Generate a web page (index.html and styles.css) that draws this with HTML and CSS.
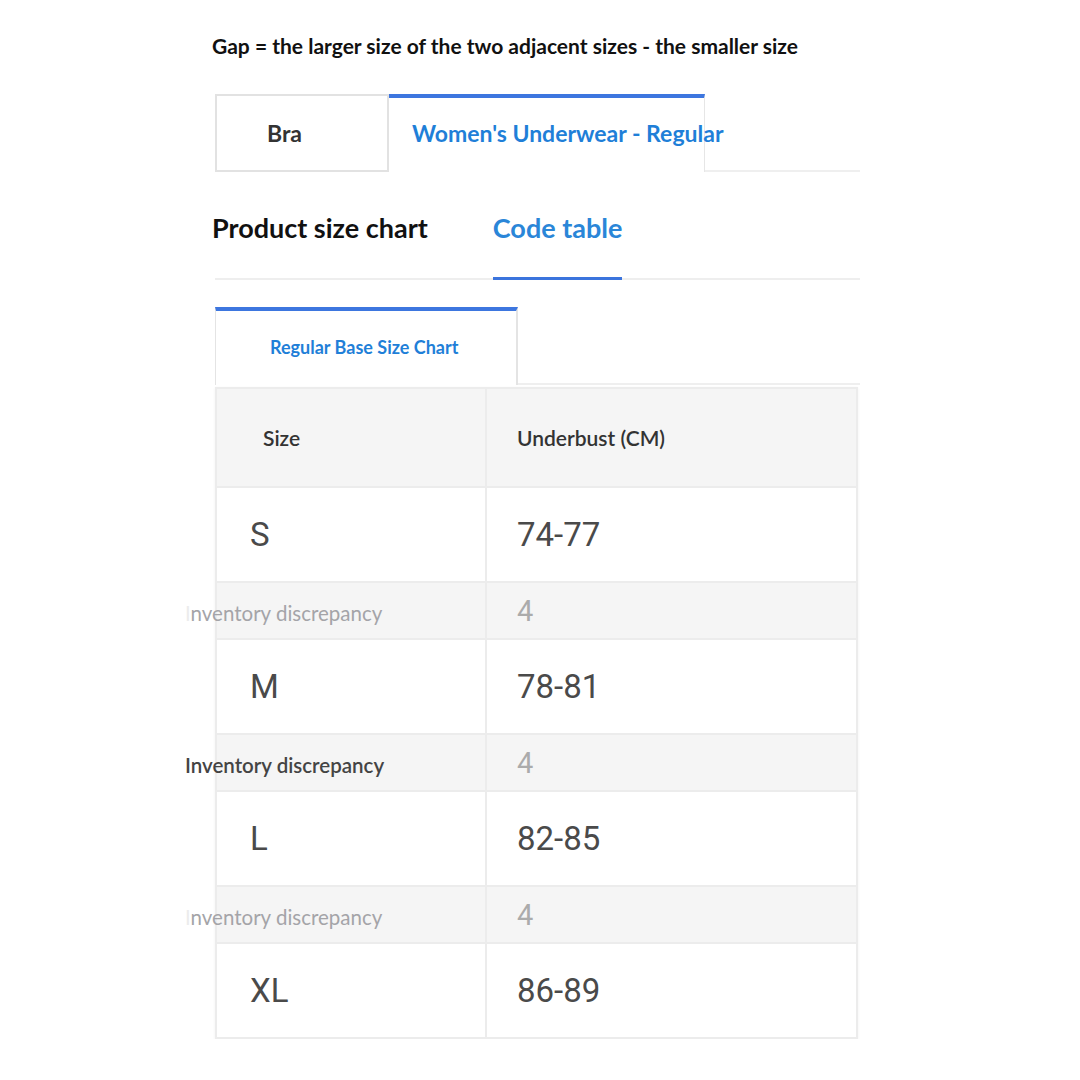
FILE: index.html
```html
<!DOCTYPE html>
<html lang="en">
<head>
    <meta charset="UTF-8">
    <title>Size Chart</title>
    <link rel="stylesheet" href="styles.css">
</head>
<body>
    <div class="page">
        <p class="note">Gap = the larger size of the two adjacent sizes - the smaller size</p>

        <div class="tabs">
            <div class="tab">Bra</div>
            <div class="tab active">Women's Underwear - Regular</div>
            <div class="tab-rest"></div>
        </div>

        <div class="sections">
            <div class="section">Product size chart</div>
            <div class="section current">Code table</div>
        </div>

        <div class="subtabs">
            <div class="subtab">Regular Base Size Chart</div>
            <div class="tab-rest"></div>
        </div>

        <table class="chart">
            <colgroup>
                <col class="col-a">
                <col class="col-b">
            </colgroup>
            <thead>
                <tr>
                    <th class="col-size">Size</th>
                    <th>Underbust (CM)</th>
                </tr>
            </thead>
            <tbody>
                <tr class="size-row">
                    <td class="col-size">S</td>
                    <td>74-77</td>
                </tr>
                <tr class="gap-row">
                    <td class="col-size"><span class="gap-label faded"><span class="cut">I</span>nventory discrepancy</span></td>
                    <td>4</td>
                </tr>
                <tr class="size-row">
                    <td class="col-size">M</td>
                    <td>78-81</td>
                </tr>
                <tr class="gap-row">
                    <td class="col-size"><span class="gap-label">Inventory discrepancy</span></td>
                    <td>4</td>
                </tr>
                <tr class="size-row">
                    <td class="col-size">L</td>
                    <td>82-85</td>
                </tr>
                <tr class="gap-row">
                    <td class="col-size"><span class="gap-label faded"><span class="cut">I</span>nventory discrepancy</span></td>
                    <td>4</td>
                </tr>
                <tr class="size-row">
                    <td class="col-size">XL</td>
                    <td>86-89</td>
                </tr>
            </tbody>
        </table>
    </div>
</body>
</html>
```

FILE: styles.css
```css
body {
    margin: 0;
    background: #fff;
    font-family: Lato, "Open Sans", sans-serif;
    color: #222;
}

.page {
    width: 645px;
    margin-left: 215px;
    padding-top: 32px;
}

.note {
    margin: 0 0 0 -3px;
    font-size: 21px;
    font-weight: bold;
    line-height: 28px;
    color: #111;
}

/* top tabs */
.tabs {
    display: flex;
    margin-top: 34px;
    height: 78px;
}

.tab {
    box-sizing: border-box;
    width: 174px;
    padding-left: 50px;
    border: 2px solid #e2e2e2;
    line-height: 74px;
    font-size: 23px;
    font-weight: bold;
    color: #333;
    white-space: nowrap;
}

.tab.active {
    width: 316px;
    padding-left: 23px;
    border: none;
    border-top: 4px solid #3d76df;
    border-right: 1px solid #e6e6e6;
    line-height: 70px;
    color: #1f7fd8;
}

.tab-rest {
    flex: 1;
    border-bottom: 2px solid #efefef;
}

/* product size chart / code table */
.sections {
    display: flex;
    gap: 65px;
    margin-top: 34px;
    border-bottom: 2px solid #eeeeee;
}

.section {
    padding-bottom: 28px;
    font-size: 27px;
    font-weight: bold;
    line-height: 44px;
    color: #111;
}

.section:first-child {
    margin-left: -3px;
}

.section.current {
    color: #2a86d8;
    box-shadow: inset 0 -3px 0 #3b74dd;
    margin-bottom: -2px;
    padding-bottom: 30px;
}

/* sub tab */
.subtabs {
    display: flex;
    margin-top: 27px;
    height: 78px;
}

.subtab {
    box-sizing: border-box;
    width: 303px;
    padding-left: 54px;
    border-top: 4px solid #3d76df;
    border-left: 1px solid #e4e4e4;
    border-right: 2px solid #e4e4e4;
    line-height: 72px;
    font-size: 18px;
    font-weight: bold;
    color: #1f7fd8;
}

/* table */
.chart {
    width: 643px;
    margin-top: 2px;
    table-layout: fixed;
    border-collapse: collapse;
    border: 2px solid #ececec;
    box-shadow: 0 1px 3px rgba(0, 0, 0, 0.06);
}

.col-a {
    width: 270px;
}

.chart th,
.chart td {
    padding: 0 0 0 30px;
    border: 2px solid #ececec;
    text-align: left;
}

.chart th {
    height: 97px;
    background: #f5f5f5;
    font-size: 21px;
    font-weight: 600;
    color: #333;
}

.chart th.col-size {
    padding-left: 46px;
}

.size-row td {
    height: 93px;
    font-family: Roboto, "Open Sans", sans-serif;
    font-size: 33px;
    color: #4a4a4a;
}

.size-row td.col-size {
    padding-left: 33px;
}

.gap-row td {
    height: 55px;
    background: #f5f5f5;
    font-family: Roboto, "Open Sans", sans-serif;
    font-size: 29px;
    color: #ababab;
}

.gap-row td.col-size {
    padding-left: 0;
}

.gap-label {
    display: inline-block;
    margin-left: -32px;
    font-family: Lato, sans-serif;
    font-size: 20.5px;
    font-weight: 600;
    color: #444;
    white-space: nowrap;
}

.gap-label.faded {
    color: #a4a4a8;
    font-weight: normal;
}

.gap-label .cut {
    color: #ececec;
}
```
